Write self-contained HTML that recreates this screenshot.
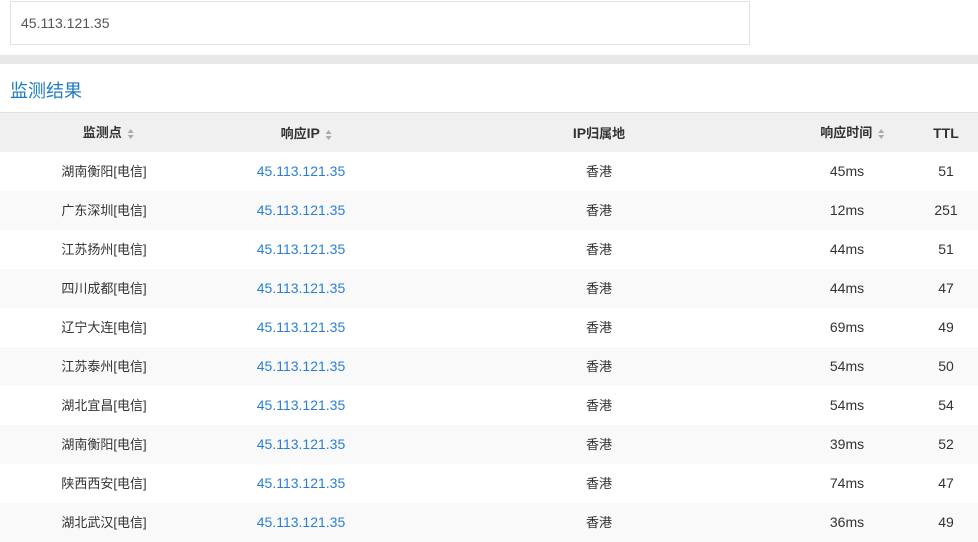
<!DOCTYPE html>
<html><head><meta charset="utf-8"><style>
body{margin:0;width:978px;height:541px;overflow:hidden;background:#fff;font-family:"Liberation Sans","Noto Sans CJK SC",sans-serif;font-size:13px;color:#333}
.inp{position:absolute;left:10px;top:1px;width:738px;height:42px;border:1px solid #e3e3e3;box-sizing:content-box}
.inp span{position:absolute;left:10px;top:13px;font-size:14px;color:#555}
.band{position:absolute;left:0;top:55px;width:978px;height:9px;background:#e8e8e8}
.title{position:absolute;left:10px;top:77px;font-size:18px;color:#1e7dc0}
.row{position:absolute;left:0;width:978px;height:39px}
.hd{top:112px;height:40px;background:#f0f0f0;border-top:1px solid #e0e0e0;box-sizing:border-box;font-weight:bold;color:#333}
.c{position:absolute;top:0;line-height:39px;text-align:center;transform:translateX(-50%);white-space:nowrap}
.n{font-size:14px}
.hd .c{line-height:40px}
.blue{color:#2a7fd4}
.s{display:inline-block;vertical-align:middle;width:6px;height:10px;position:relative;margin-left:2px}
.s:before,.s:after{content:"";position:absolute;left:0;border-left:3px solid transparent;border-right:3px solid transparent}
.s:before{top:0;border-bottom:4px solid #aaa}
.s:after{top:6px;border-top:4px solid #aaa}
</style></head><body>
<div class="inp"><span>45.113.121.35</span></div>
<div class="band"></div>
<div class="title">监测结果</div>
<div class="row hd">
<div class="c" style="left:108px">监测点 <span class="s"></span></div>
<div class="c" style="left:306px">响应<span class="n">IP</span> <span class="s"></span></div>
<div class="c" style="left:599px"><span class="n">IP</span>归属地</div>
<div class="c" style="left:852px">响应时间 <span class="s"></span></div>
<div class="c n" style="left:946px">TTL</div>
</div>
<div id="rows"></div>
<script>
var d=[["湖南衡阳","45","51"],["广东深圳","12","251"],["江苏扬州","44","51"],["四川成都","44","47"],["辽宁大连","69","49"],["江苏泰州","54","50"],["湖北宜昌","54","54"],["湖南衡阳","39","52"],["陕西西安","74","47"],["湖北武汉","36","49"]];
var h="";d.forEach(function(r,i){h+='<div class="row" style="top:'+(152+i*39)+'px;background:'+(i%2?'#f9f9f9':'#fff')+'"><div class="c" style="left:104px">'+r[0]+'[电信]</div><div class="c blue n" style="left:301px">45.113.121.35</div><div class="c" style="left:599px">香港</div><div class="c n" style="left:847px">'+r[1]+'ms</div><div class="c n" style="left:946px">'+r[2]+'</div></div>'});
document.getElementById("rows").innerHTML=h;
</script>
</body></html>
